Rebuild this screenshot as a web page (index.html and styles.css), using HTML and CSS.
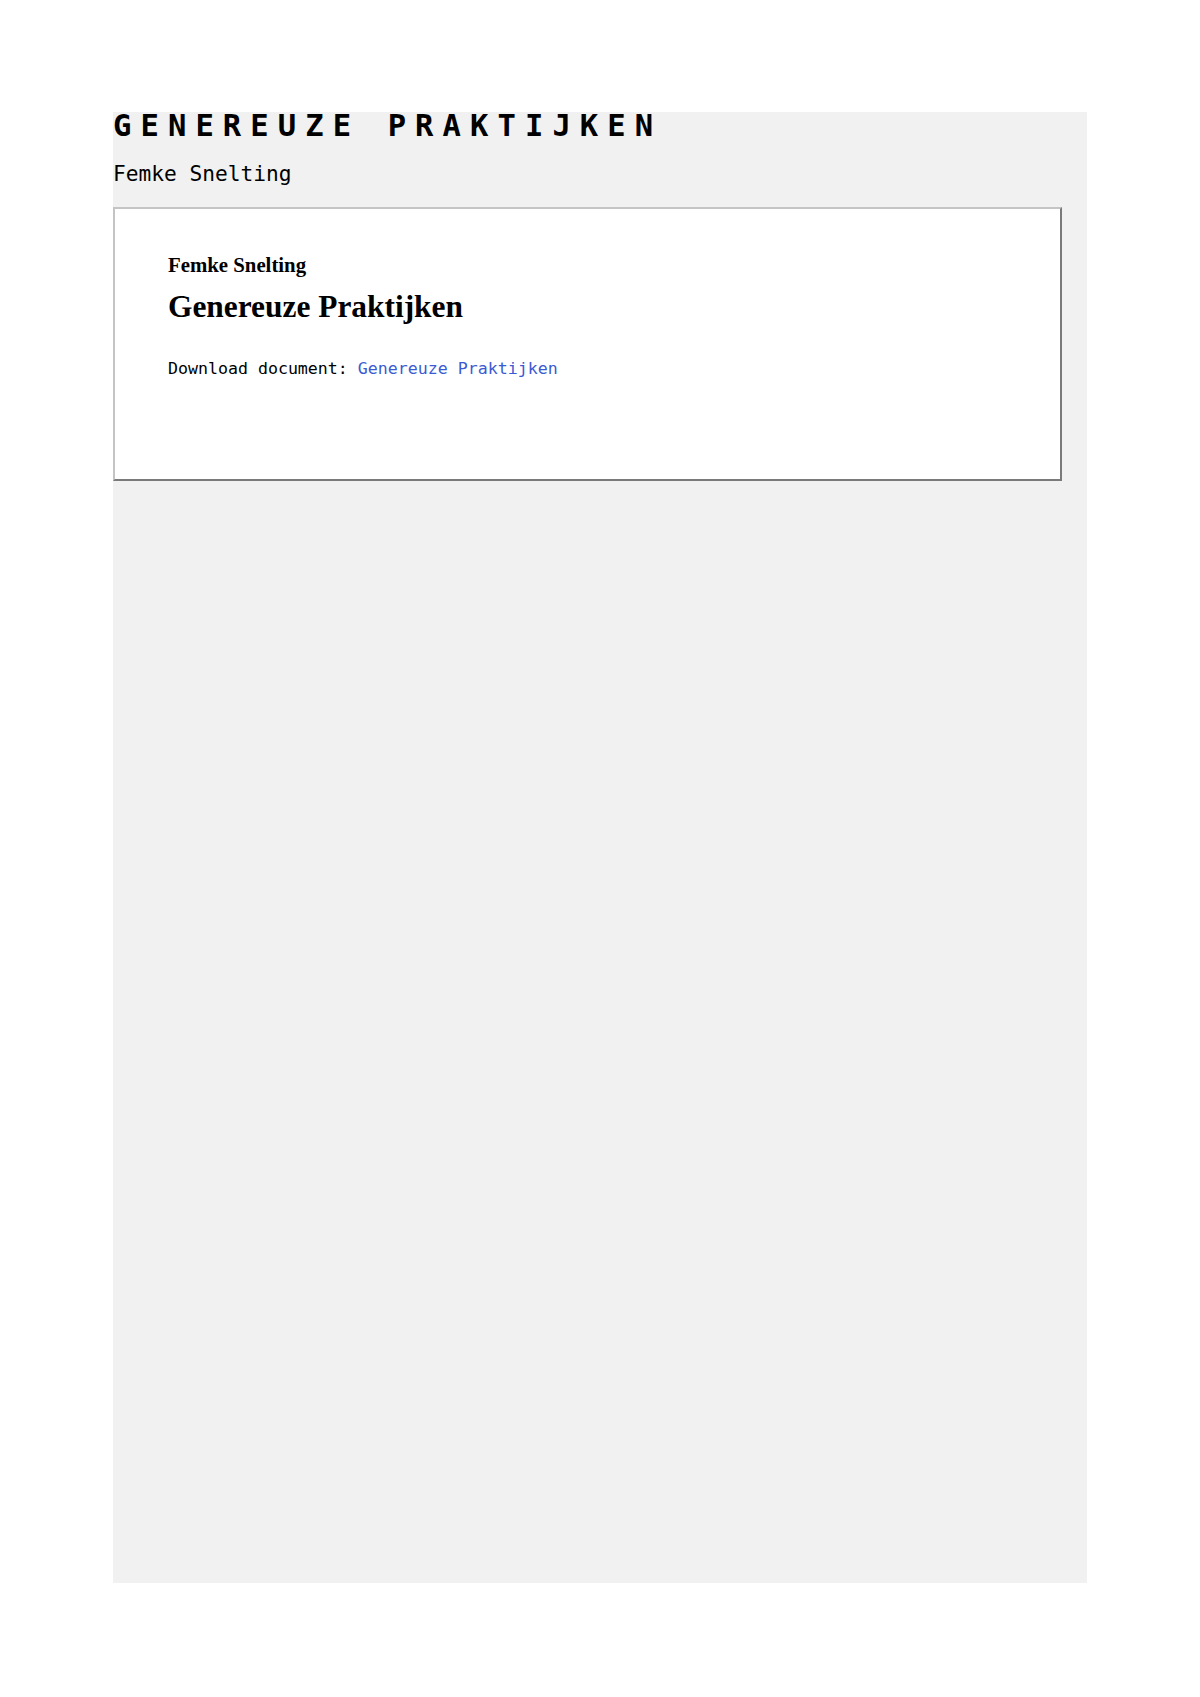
FILE: index.html
```html
<!DOCTYPE html>
<html lang="nl">
<head>
<meta charset="utf-8">
<title>Genereuze Praktijken</title>
<link rel="stylesheet" href="styles.css">
</head>
<body>
<main class="page">
  <h1 class="title">GENEREUZE PRAKTIJKEN</h1>
  <p class="author">Femke Snelting</p>
  <section class="frame">
    <h4 class="frame-author">Femke Snelting</h4>
    <h2 class="frame-title">Genereuze Praktijken</h2>
    <p class="download">Download document: <a href="#" class="download-link">Genereuze Praktijken</a></p>
  </section>
</main>
</body>
</html>
```
FILE: styles.css
```css
html, body {
  margin: 0;
  padding: 0;
  background: #ffffff;
}
.page {
  box-sizing: border-box;
  width: 974px;
  height: 1471px;
  margin: 112px 0 0 113px;
  background: #f1f1f1;
  display: flex;
  flex-direction: column;
  align-items: flex-start;
}
.title {
  margin: 0;
  font-family: "DejaVu Sans Mono", monospace;
  font-weight: bold;
  font-size: 30.5px;
  line-height: 28px;
  letter-spacing: 9.1px;
  color: #000;
}
.author {
  margin: 22px 0 0 0;
  font-family: "DejaVu Sans Mono", monospace;
  font-size: 21.2px;
  line-height: 24px;
  color: #000;
}
.frame {
  box-sizing: border-box;
  width: 949px;
  height: 274px;
  margin-top: 21px;
  background: #ffffff;
  border-style: solid;
  border-width: 2px;
  border-color: #c4c4c4 #7a7a7a #7a7a7a #c4c4c4;
  padding: 44px 53px 0 53px;
  display: flex;
  flex-direction: column;
}
.frame-author {
  margin: 0;
  font-family: "Liberation Serif", serif;
  font-weight: bold;
  font-size: 20.8px;
  line-height: 23px;
  color: #000;
}
.frame-title {
  margin: 14px 0 0 0;
  font-family: "Liberation Serif", serif;
  font-weight: bold;
  font-size: 31.4px;
  line-height: 34.5px;
  color: #000;
}
.download {
  margin: 34px 0 0 0;
  font-family: "DejaVu Sans Mono", monospace;
  font-size: 16.6px;
  line-height: 19.3px;
  color: #000;
}
.download-link {
  color: #3c5ad2;
  text-decoration: none;
}
```
